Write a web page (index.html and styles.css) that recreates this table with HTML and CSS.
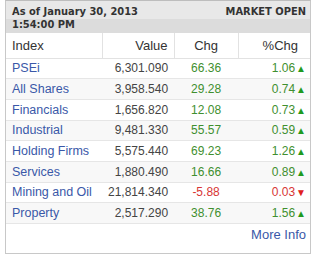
FILE: index.html
```html
<!DOCTYPE html>
<html>
<head>
<meta charset="utf-8">
<link rel="stylesheet" href="styles.css">
</head>
<body>
<div class="panel">
  <div class="head">
    <div class="head-row1">
      <span class="asof">As of January 30, 2013</span>
      <span class="status">MARKET OPEN</span>
    </div>
    <div class="head-row2">1:54:00 PM</div>
  </div>
  <table class="idx">
    <thead>
      <tr><th class="c-name">Index</th><th class="c-val">Value</th><th class="c-chg">Chg</th><th class="c-pct">%Chg</th></tr>
    </thead>
    <tbody>
      <tr><td class="c-name"><a>PSEi</a></td><td class="c-val">6,301.090</td><td class="c-chg up">66.36</td><td class="c-pct up">1.06<span class="arr">▲</span></td></tr>
      <tr class="alt"><td class="c-name"><a>All Shares</a></td><td class="c-val">3,958.540</td><td class="c-chg up">29.28</td><td class="c-pct up">0.74<span class="arr">▲</span></td></tr>
      <tr><td class="c-name"><a>Financials</a></td><td class="c-val">1,656.820</td><td class="c-chg up">12.08</td><td class="c-pct up">0.73<span class="arr">▲</span></td></tr>
      <tr class="alt"><td class="c-name"><a>Industrial</a></td><td class="c-val">9,481.330</td><td class="c-chg up">55.57</td><td class="c-pct up">0.59<span class="arr">▲</span></td></tr>
      <tr><td class="c-name"><a>Holding Firms</a></td><td class="c-val">5,575.440</td><td class="c-chg up">69.23</td><td class="c-pct up">1.26<span class="arr">▲</span></td></tr>
      <tr class="alt"><td class="c-name"><a>Services</a></td><td class="c-val">1,880.490</td><td class="c-chg up">16.66</td><td class="c-pct up">0.89<span class="arr">▲</span></td></tr>
      <tr><td class="c-name"><a>Mining and Oil</a></td><td class="c-val">21,814.340</td><td class="c-chg down">-5.88</td><td class="c-pct down">0.03<span class="arr">▼</span></td></tr>
      <tr class="alt"><td class="c-name"><a>Property</a></td><td class="c-val">2,517.290</td><td class="c-chg up">38.76</td><td class="c-pct up">1.56<span class="arr">▲</span></td></tr>
    </tbody>
  </table>
  <div class="more"><a>More Info</a></div>
</div>
</body>
</html>
```
FILE: styles.css
```css
* { box-sizing: border-box; }
body { margin: 0; background: #fff; font-family: "Liberation Sans", Arial, sans-serif; }
.panel {
  margin-left: 5px;
  width: 306px;
  height: 254px;
  border: 1px solid #c8c8c8;
  border-top-color: #bdbdbd;
}
.head { background: #e3e3e3; color: #333; font-family: "DejaVu Sans Condensed", "DejaVu Sans", sans-serif; font-weight: bold; font-size: 11px; }
.head-row1 { display: flex; justify-content: space-between; padding: 4px 4px 0 6px; height: 18px; background: #e8e8e8; }
.head-row2 { padding: 0 6px; height: 14px; line-height: 12px; background: #dcdcdc; }
.idx { width: 100%; border-collapse: collapse; font-size: 12px; }
.idx th { font-weight: normal; color: #333; height: 25px; border-left: 1px solid #e2e2e2; border-bottom: 1px solid #e2e2e2; padding: 0 6px; font-size: 13px; }
.idx th:first-child { border-left: none; }
.idx td { height: 20.7px; border-bottom: 1px solid #e6e6e6; padding: 0 6px; color: #444; }
.idx tr.alt td { background: #f8f8f8; }
.c-name { text-align: left; width: 96px; }
.idx td.c-name { font-size: 12.5px; }
.c-val { text-align: right; width: 63px; }
.c-chg { text-align: center; width: 64px; }
.c-pct { text-align: right; }
.idx th.c-pct { padding-right: 12px; }
.idx td.c-pct { padding-right: 4px; }
.idx a { color: #3a58a8; }
.up { color: #3f8f2f; }
.idx td.up { color: #3f8f2f; }
.idx td.down { color: #d83535; }
.arr { font-size: 10px; margin-left: 1px; color: #1e9a1e; }
.down .arr { color: #e02020; }
.more { text-align: right; padding: 3px 4px 0 0; font-size: 13px; }
.more a { color: #3a58a8; }
```
